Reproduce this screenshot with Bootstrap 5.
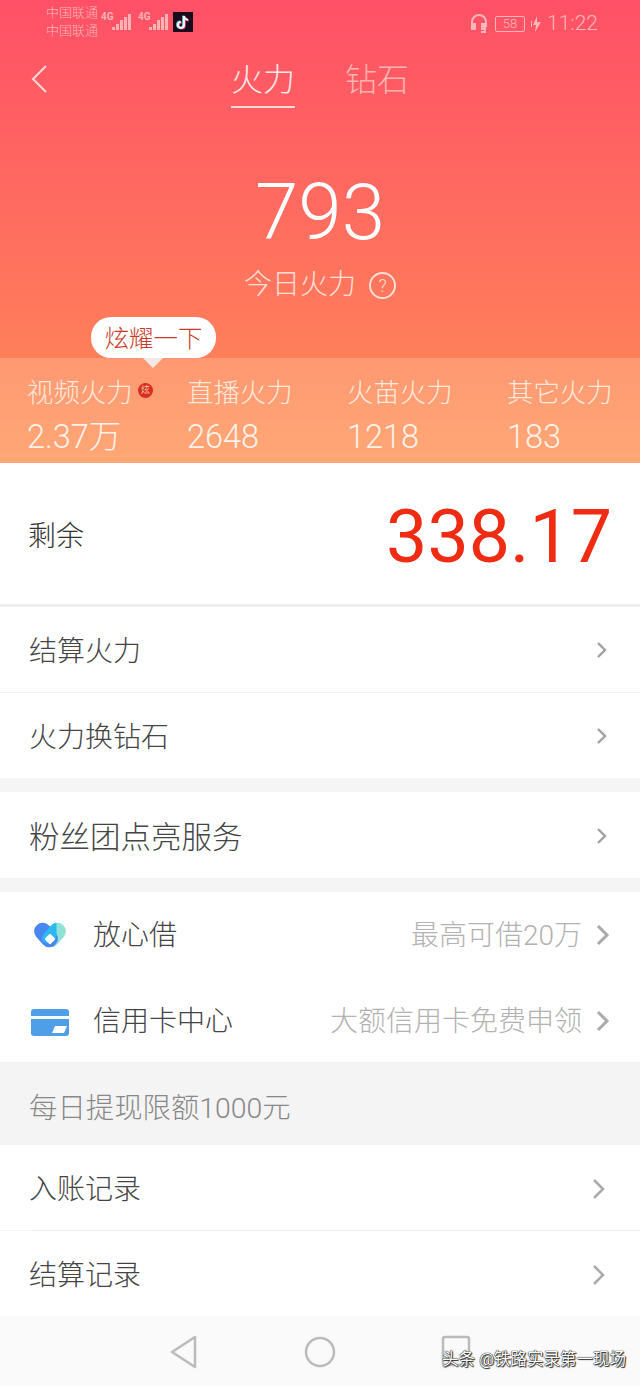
<!DOCTYPE html>
<html lang="zh-CN">
<head>
<meta charset="UTF-8">
<title>火力</title>
<link href="https://cdn.jsdelivr.net/npm/bootstrap@5.3.0/dist/css/bootstrap.min.css" rel="stylesheet">
<style>
html, body { width: 640px; height: 1386px; overflow: hidden; }
body { font-family: "Roboto", "Noto Sans CJK SC", sans-serif; background: #f5f5f5; color: #333; font-weight: 300; }
.hero { height: 358px; background: linear-gradient(180deg, #ff5067 0%, #ff7f5a 100%); color: #fff; }
.status-bar { height: 44px; padding: 4px 42px 0 46px; }
.carrier { font-size: 13px; line-height: 18px; color: #ffb3b5; width: 55px; }
.tiny-4g { font-size: 10px; line-height: 10px; color: #ffb3b5; font-weight: 700; width: 11px; }
.second-4g { margin-left: 6px; }
.tiktok { width: 20px; height: 20px; margin-left: 4px; }
.status-right { color: #ffb6b8; font-size: 21px; gap: 6px; }
.batt { width: 30px; height: 16px; border: 1px solid #ffb6b8; border-radius: 2px; font-size: 13px; line-height: 14px; }
.top-nav { height: 64px; margin-top: 14px; }
.back-btn { left: 30px; top: 7px; }
.tab-on { font-size: 32px; line-height: 44px; width: 64px; padding-bottom: 4px; border-bottom: 2px solid #ffd9d9; color: #ffe9e6; }
.tab-off { font-size: 32px; line-height: 44px; color: #ffb3ae; margin-left: 50px; }
.big-num { font-size: 78px; line-height: 80px; margin-top: 51px; color: #fff; font-weight: 300; }
.big-label { font-size: 28px; line-height: 36px; margin-top: 14px; color: #ffe0d8; }
.help-mark { width: 27px; height: 27px; border: 2px solid #ffe0d8; border-radius: 50%; font-size: 18px; line-height: 23px; margin-left: 13px; }
.stats-band { height: 105px; background: linear-gradient(180deg, #ff9872 0%, #ffa876 100%); color: #fff; padding: 17px 0 0 27px; }
.stat-cell { flex: 0 0 160px; }
.stat-name { font-size: 26.4px; line-height: 36px; color: #ffe9dd; white-space: nowrap; }
.stat-val { font-size: 32.5px; line-height: 38px; margin-top: 7px; color: #fff2ea; white-space: nowrap; }
.fire-dot { width: 15px; height: 15px; border-radius: 50%; background: #d92d20; color: #ffd; font-size: 9px; line-height: 15px; left: 138px; top: 25px; text-align: center; }
.bubble { left: 91px; top: 317px; width: 125px; height: 41px; background: #fff; border-radius: 20px; color: #c9392c; font-size: 24.4px; line-height: 43px; text-align: center; z-index: 3; }
.bubble-tip { left: 143px; top: 358px; width: 0; height: 0; border-left: 10px solid transparent; border-right: 10px solid transparent; border-top: 10px solid #f2e9e6; z-index: 3; }
.list-row { background: #fff; padding: 5px 29px 0; font-size: 28px; color: #444; }
.row-sm { height: 85px; }
.row-tall { height: 86px; }
.row-high { padding-top: 3px; }
.rest-row { height: 141px; padding: 7px 28px 0; font-size: 28px; color: #333; }
.rest-num { color: #ef2b13; font-size: 73.5px; line-height: 80px; font-weight: 400; }
.line-heavy { height: 3px; background: #efefef; }
.line-soft { height: 1px; background: #f0f0f0; }
.line-inset { height: 1px; background: #f0f0f0; margin-left: 29px; }
.gap-band { height: 14px; background: #f5f5f5; }
.fans-label { font-size: 30.5px; }
.tip-band { height: 83px; background: #f4f4f4; padding: 12px 29px 0; font-size: 28.4px; color: #888; }
.heart-icon { width: 32px; margin-left: 5px; margin-right: 27px; }
.card-icon { width: 38px; margin-left: 2px; margin-right: 24px; }
.hint { color: #b2b2b2; font-size: 28px; margin-right: 13px; }
.chev-sm { margin-right: 3px; margin-bottom: 4px; }
.chev-low { margin-right: 4px; margin-bottom: 3px; }
.chev-big { margin-bottom: 3px; }
.bottom-nav { height: 70px; background: #fafafa; }
.mark-txt { right: 14px; bottom: 13px; font-size: 16.5px; color: #fff; text-shadow: 0 0 1px #000, 0 0 1px #000, 1px 1px 1px #333; font-weight: 400; }
</style>
</head>
<body>
<div class="position-relative">
  <div class="hero">
    <div class="status-bar d-flex justify-content-between">
      <div class="d-flex align-items-start">
        <div class="carrier">中国联通<br>中国联通</div>
        <div class="tiny-4g mt-2">4G</div>
        <svg width="20" height="20" class="mt-2" viewBox="0 0 20 20"><g fill="#ffb3b5"><rect x="0" y="15" width="3" height="3"/><rect x="4" y="12" width="3" height="6"/><rect x="8" y="8" width="3" height="10"/><rect x="12" y="5" width="3" height="13"/><rect x="16" y="2" width="3" height="16"/></g></svg>
        <div class="tiny-4g second-4g mt-2">4G</div>
        <svg width="20" height="20" class="mt-2" viewBox="0 0 20 20"><g fill="#ffb3b5"><rect x="0" y="15" width="3" height="3"/><rect x="4" y="12" width="3" height="6"/><rect x="8" y="8" width="3" height="10"/><rect x="12" y="5" width="3" height="13"/><rect x="16" y="2" width="3" height="16"/></g></svg>
        <svg class="tiktok mt-2" viewBox="0 0 20 20"><rect width="20" height="20" fill="#1a0a1e"/><g fill="none" stroke-width="2.2"><path d="M11 4v9a3 3 0 1 1-3-3M11 4c.3 2.3 1.8 3.6 4 3.8" stroke="#f0456a" transform="translate(.7 .5)"/><path d="M11 4v9a3 3 0 1 1-3-3M11 4c.3 2.3 1.8 3.6 4 3.8" stroke="#6fe6ea" transform="translate(-.7 -.3)"/><path d="M11 4v9a3 3 0 1 1-3-3M11 4c.3 2.3 1.8 3.6 4 3.8" stroke="#fff" stroke-width="1.7"/></g></svg>
      </div>
      <div class="status-right d-flex align-items-center">
        <svg width="20" height="22" viewBox="0 0 20 22" fill="none" stroke="#ffb6b8" stroke-width="2"><path d="M3 14V9a7 7 0 0 1 14 0v5"/><rect x="3" y="11" width="3" height="5" fill="#ffb6b8"/><rect x="13" y="11" width="3" height="5" fill="#ffb6b8"/><path d="M16 16v3h-4"/></svg>
        <div class="batt text-center">58</div>
        <svg width="10" height="16" viewBox="0 0 10 16"><rect x="-1" y="5" width="2" height="6" fill="#ffb6b8"/><path d="M6 0 2 9h3l-1 7 6-10H6z" fill="#ffb6b8"/></svg>
        <span>11:22</span>
      </div>
    </div>
    <div class="top-nav position-relative d-flex justify-content-center align-items-start">
      <svg class="back-btn position-absolute" width="18" height="28" viewBox="0 0 18 28" fill="none" stroke="#ffd9d9" stroke-width="2"><path d="M16 1 3 14l13 13"/></svg>
      <div class="tab-on text-center">火力</div>
      <div class="tab-off">钻石</div>
    </div>
    <div class="text-center big-num">793</div>
    <div class="big-label d-flex justify-content-center align-items-center">今日火力<span class="help-mark d-inline-block text-center">?</span></div>
  </div>
  <div class="bubble position-absolute">炫耀一下</div>
  <div class="bubble-tip position-absolute"></div>
  <div class="stats-band d-flex position-relative">
    <div class="stat-cell"><div class="stat-name">视频火力</div><div class="stat-val">2.37万</div></div>
    <div class="stat-cell"><div class="stat-name">直播火力</div><div class="stat-val">2648</div></div>
    <div class="stat-cell"><div class="stat-name">火苗火力</div><div class="stat-val">1218</div></div>
    <div class="stat-cell"><div class="stat-name">其它火力</div><div class="stat-val">183</div></div>
    <div class="fire-dot position-absolute">炫</div>
  </div>
  <div class="list-row rest-row d-flex justify-content-between align-items-center"><span>剩余</span><span class="rest-num">338.17</span></div>
  <div class="line-heavy"></div>
  <div class="list-row row-sm d-flex justify-content-between align-items-center"><span>结算火力</span><svg class="chev-sm" width="12" height="18" viewBox="0 0 12 18" fill="none" stroke="#a0a0a0" stroke-width="2.4"><path d="m2 2 7 7-7 7"/></svg></div>
  <div class="line-soft"></div>
  <div class="list-row row-sm d-flex justify-content-between align-items-center"><span>火力换钻石</span><svg class="chev-sm" width="12" height="18" viewBox="0 0 12 18" fill="none" stroke="#a0a0a0" stroke-width="2.4"><path d="m2 2 7 7-7 7"/></svg></div>
  <div class="gap-band"></div>
  <div class="list-row row-tall d-flex justify-content-between align-items-center"><span class="fans-label">粉丝团点亮服务</span><svg class="chev-sm" width="12" height="18" viewBox="0 0 12 18" fill="none" stroke="#a0a0a0" stroke-width="2.4"><path d="m2 2 7 7-7 7"/></svg></div>
  <div class="gap-band"></div>
  <div class="list-row row-sm row-high d-flex align-items-center">
    <svg class="heart-icon" height="30" viewBox="0 0 32 30">
      <defs><clipPath id="leftLobe"><rect x="3.5" y="0.5" width="17" height="27" rx="8.5" transform="rotate(-42 12 14)"/></clipPath></defs>
      <rect x="11.5" y="0.5" width="17" height="27" rx="8.5" transform="rotate(42 20 14)" fill="#8fe3d6"/>
      <rect x="3.5" y="0.5" width="17" height="27" rx="8.5" transform="rotate(-42 12 14)" fill="#4a86f2"/>
      <rect x="11.5" y="0.5" width="17" height="27" rx="8.5" transform="rotate(42 20 14)" fill="#2cb9f2" clip-path="url(#leftLobe)"/>
      <rect x="12" y="14" width="8" height="8" rx="1.5" transform="rotate(45 16 18)" fill="#fff"/>
    </svg>
    <span>放心借</span>
    <span class="hint ms-auto">最高可借20万</span>
    <svg class="chev-big" width="16" height="24" viewBox="0 0 16 24" fill="none" stroke="#aaa" stroke-width="3"><path d="m3 3 9 9-9 9"/></svg>
  </div>
  <div class="list-row row-sm d-flex align-items-center">
    <svg class="card-icon" height="27" viewBox="0 0 38 27"><rect width="38" height="27" rx="3" fill="#4f9ee8"/><rect y="7" width="38" height="3" fill="#fff"/><path d="m24 17h12l-3 7H21z" fill="#fff"/></svg>
    <span>信用卡中心</span>
    <span class="hint ms-auto">大额信用卡免费申领</span>
    <svg class="chev-big" width="16" height="24" viewBox="0 0 16 24" fill="none" stroke="#aaa" stroke-width="3"><path d="m3 3 9 9-9 9"/></svg>
  </div>
  <div class="tip-band d-flex align-items-center">每日提现限额1000元</div>
  <div class="list-row row-sm d-flex justify-content-between align-items-center"><span>入账记录</span><svg class="chev-low" width="16" height="24" viewBox="0 0 16 24" fill="none" stroke="#aaa" stroke-width="2.5"><path d="m3 3 9 9-9 9"/></svg></div>
  <div class="line-inset"></div>
  <div class="list-row row-sm d-flex justify-content-between align-items-center"><span>结算记录</span><svg class="chev-low" width="16" height="24" viewBox="0 0 16 24" fill="none" stroke="#aaa" stroke-width="2.5"><path d="m3 3 9 9-9 9"/></svg></div>
  <div class="bottom-nav position-relative d-flex align-items-start">
    <svg class="ms-auto me-auto mt-3" width="320" height="40" viewBox="0 0 320 40" fill="none" stroke="#bbb" stroke-width="2.5"><path d="M35 5 12 20l23 15z" stroke-linejoin="round"/><circle cx="160" cy="20" r="14"/><rect x="283" y="5" width="26" height="28" rx="2"/></svg>
    <div class="mark-txt position-absolute">头条 @铁路实录第一现场</div>
  </div>
</div>
<script src="https://cdn.jsdelivr.net/npm/bootstrap@5.3.0/dist/js/bootstrap.bundle.min.js"></script>
</body>
</html>
